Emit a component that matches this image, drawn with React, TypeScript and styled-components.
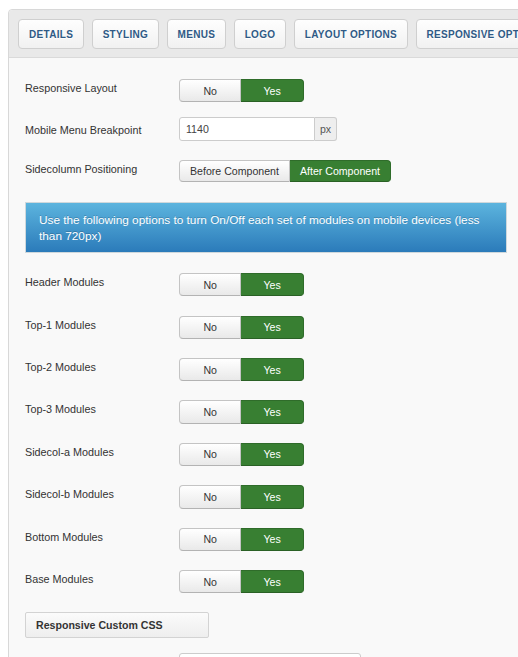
import React from 'react';
import styled, { createGlobalStyle } from 'styled-components';

const GlobalStyle = createGlobalStyle`
  * { box-sizing: border-box; }
  html, body {
    margin: 0;
    background: #fff;
    overflow: hidden;
  }
  body {
    padding: 9px 0 0 8px;
    font-family: 'Liberation Sans', Arial, sans-serif;
    color: #333;
  }
`;

const Panel = styled.div`
  width: 520px;
  border: 1px solid #d8d8d8;
  border-radius: 4px 0 0 0;
  background: #f9f9f9;
`;

const TabBar = styled.div`
  display: flex;
  gap: 7.5px;
  padding: 9px 9px 8px;
  background: #e9e9e9;
  border-bottom: 1px solid #dadada;
  border-radius: 4px 0 0 0;
  overflow: hidden;
`;

const Tab = styled.div`
  flex: none;
  height: 30px;
  padding: 0 10px;
  display: flex;
  align-items: center;
  border: 1px solid #cfcfcf;
  border-radius: 4px;
  background: linear-gradient(#fefefe, #f1f1f1);
  color: #2f5a86;
  font-size: 10px;
  font-weight: bold;
  letter-spacing: 0.3px;
  text-shadow: 0 1px 0 #fff;
  white-space: nowrap;
`;

const Content = styled.div`
  padding: 21px 16px 0;
`;

const ControlGroup = styled.div<{ $space?: number }>`
  display: flex;
  align-items: flex-start;
  margin-bottom: ${(p) => p.$space ?? 19.13}px;
`;

const Label = styled.div<{ $offset?: number }>`
  width: 154px;
  flex: none;
  font-size: 10.8px;
  line-height: 16px;
  padding-top: ${(p) => p.$offset ?? 1}px;
  color: #333;
`;

const BtnGroup = styled.div`
  display: flex;
`;

const SegButton = styled.div<{ $active?: boolean; $w?: number; $h?: number }>`
  width: ${(p) => (p.$w ? `${p.$w}px` : 'auto')};
  height: ${(p) => p.$h ?? 23.3}px;
  padding: ${(p) => (p.$w ? '0' : '0 10px')};
  display: flex;
  align-items: center;
  justify-content: center;
  font-size: 10.6px;
  border: 1px solid ${(p) => (p.$active ? '#2f6c2a' : '#c4c4c4')};
  border-bottom-color: ${(p) => (p.$active ? '#2a6125' : '#b3b3b3')};
  background: ${(p) => (p.$active ? '#387f32' : 'linear-gradient(#ffffff, #e9e9e9)')};
  color: ${(p) => (p.$active ? '#fff' : '#333')};
  white-space: nowrap;
  &:first-child {
    border-radius: 4px 0 0 4px;
  }
  &:last-child {
    border-radius: 0 4px 4px 0;
  }
  & + & {
    border-left-width: ${(p) => (p.$active ? '0' : '1px')};
  }
`;

const InputWrap = styled.div`
  display: flex;
  height: 23.4px;
`;

const TextInput = styled.div`
  width: 136px;
  height: 100%;
  padding: 0 6px;
  display: flex;
  align-items: center;
  background: #fff;
  border: 1px solid #ccc;
  border-radius: 3px 0 0 3px;
  font-size: 10.6px;
  color: #444;
`;

const AddOn = styled.div`
  width: 22px;
  height: 100%;
  display: flex;
  align-items: center;
  justify-content: center;
  background: #eee;
  border: 1px solid #ccc;
  border-left: none;
  border-radius: 0 3px 3px 0;
  font-size: 10.6px;
  color: #555;
`;

const InfoBar = styled.div`
  width: 482px;
  height: 51px;
  margin-bottom: 19.7px;
  padding: 9px 13px 7px;
  border: 1px solid #cfd8dc;
  background: linear-gradient(#5cb4de, #2b7bba);
  color: #fff;
  font-size: 11.8px;
  line-height: 16px;
  text-shadow: 0 -1px 0 rgba(0, 0, 0, 0.2);
`;

const SectionButton = styled.div`
  width: 184px;
  height: 25.7px;
  margin-bottom: 15px;
  padding: 0 10px;
  display: flex;
  align-items: center;
  border: 1px solid #d3d3d3;
  border-radius: 2px;
  background: linear-gradient(#fbfbfb, #eeeeee);
  font-size: 10.6px;
  font-weight: bold;
  color: #333;
`;

const TextArea = styled.div`
  width: 182px;
  height: 60px;
  margin-left: 154px;
  background: #fff;
  border: 1px solid #ccc;
  border-radius: 3px;
`;

const tabs = ['DETAILS', 'STYLING', 'MENUS', 'LOGO', 'LAYOUT OPTIONS', 'RESPONSIVE OPTIONS'];

const moduleRows = [
  'Header Modules',
  'Top-1 Modules',
  'Top-2 Modules',
  'Top-3 Modules',
  'Sidecol-a Modules',
  'Sidecol-b Modules',
  'Bottom Modules',
  'Base Modules',
];

function YesNo() {
  return (
    <BtnGroup>
      <SegButton $w={62.3}>No</SegButton>
      <SegButton $w={62.7} $active>
        Yes
      </SegButton>
    </BtnGroup>
  );
}

export default function App() {
  return (
    <>
      <GlobalStyle />
      <Panel>
        <TabBar>
          {tabs.map((t) => (
            <Tab key={t}>{t}</Tab>
          ))}
        </TabBar>
        <Content>
          <ControlGroup $space={15}>
            <Label>Responsive Layout</Label>
            <YesNo />
          </ControlGroup>

          <ControlGroup>
            <Label $offset={5}>Mobile Menu Breakpoint</Label>
            <InputWrap>
              <TextInput>1140</TextInput>
              <AddOn>px</AddOn>
            </InputWrap>
          </ControlGroup>

          <ControlGroup $space={20}>
            <Label>Sidecolumn Positioning</Label>
            <BtnGroup>
              <SegButton $h={22.6}>Before Component</SegButton>
              <SegButton $h={22.6} $active>
                After Component
              </SegButton>
            </BtnGroup>
          </ControlGroup>

          <InfoBar>
            Use the following options to turn On/Off each set of modules on mobile devices (less
            than 720px)
          </InfoBar>

          {moduleRows.map((name) => (
            <ControlGroup key={name}>
              <Label>{name}</Label>
              <YesNo />
            </ControlGroup>
          ))}

          <SectionButton>Responsive Custom CSS</SectionButton>
          <TextArea />
        </Content>
      </Panel>
    </>
  );
}
